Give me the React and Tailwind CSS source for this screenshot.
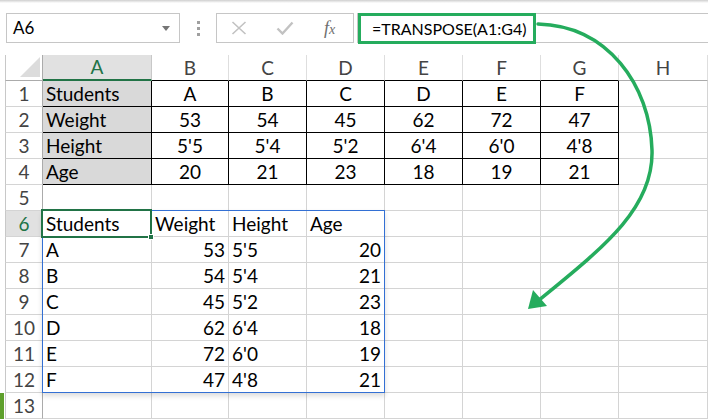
import React from 'react';

const COLS = ['A', 'B', 'C', 'D', 'E', 'F', 'G', 'H'];
const UPPER = [
  ['Students', 'A', 'B', 'C', 'D', 'E', 'F'],
  ['Weight', '53', '54', '45', '62', '72', '47'],
  ['Height', "5'5", "5'4", "5'2", "6'4", "6'0", "4'8"],
  ['Age', '20', '21', '23', '18', '19', '21'],
];
const LOWER = [
  ['Students', 'Weight', 'Height', 'Age'],
  ['A', '53', "5'5", '20'],
  ['B', '54', "5'4", '21'],
  ['C', '45', "5'2", '23'],
  ['D', '62', "6'4", '18'],
  ['E', '72', "6'0", '19'],
  ['F', '47', "4'8", '21'],
];

function Cell({ r, c }) {
  let text = '';
  let align = 'justify-start';
  let cls = 'border-r border-b border-[#d4d4d4]';
  if (r >= 1 && r <= 4 && c <= 6) {
    text = UPPER[r - 1][c];
    align = c === 0 ? 'justify-start' : 'justify-center';
    cls = c === 0 ? 'border-r border-b border-black bg-[#d9d9d9]' : 'border-r border-b border-black';
  } else if (r >= 6 && r <= 12 && c <= 3) {
    text = LOWER[r - 6][c];
    if (r > 6 && (c === 1 || c === 3)) align = 'justify-end';
  }
  return (
    <div className={`${cls} flex items-center ${align} px-[3px] pt-[1px] whitespace-nowrap`}>
      {text}
    </div>
  );
}

function Sheet() {
  const rows = [];
  rows.push(<div key="h-strip" className="bg-white" />);
  rows.push(
    <div key="corner" className="border-l border-r border-b border-l-[#c8c8c8] border-r-[#ababab] border-b-[#ababab] bg-white flex items-end justify-end pr-[2px] pb-[3px]">
      <svg width="20" height="20" viewBox="0 0 20 20">
        <polygon points="0,20 20,0 20,20" fill="#dcdcdc" />
      </svg>
    </div>
  );
  COLS.forEach((col, i) => {
    let cls;
    if (i === 0) cls = 'bg-[#e1e1e1] text-[#217346] border-r border-[#c8c8c8] border-b-2 border-b-[#217346]';
    else if (i <= 6) cls = 'bg-white text-[#444] border-r border-b border-r-[#dedede] border-b-black';
    else cls = 'bg-white text-[#444] border-r border-b border-r-[#dedede] border-b-[#ababab]';
    rows.push(
      <div key={'ch' + col} className={`${cls} flex items-center justify-center pt-[1px]`}>
        {col}
      </div>
    );
  });
  for (let r = 1; r <= 13; r++) {
    rows.push(
      <div key={'s' + r} className="flex justify-start">
        {r === 13 ? <div className="w-[4px] bg-[#5e9f2c]" /> : null}
      </div>
    );
    rows.push(
      <div
        key={'rh' + r}
        className={`${r === 6 ? 'bg-[#e1e1e1] text-[#217346] border-r-[#217346]' : 'bg-white text-[#444] border-r-[#ababab]'} border-l border-r border-b border-l-[#c8c8c8] border-b-[#d4d4d4] flex items-center justify-center pt-[1px]`}
      >
        {r}
      </div>
    );
    for (let c = 0; c < 8; c++) rows.push(<Cell key={r + '-' + c} r={r} c={c} />);
  }
  return (
    <div className="relative">
      <div className="grid grid-cols-[5px_38px_109px_77px_78px_78px_78px_78px_78px_89px] auto-rows-[26px] text-black">
        {rows}
      </div>
      <div className="absolute left-[42px] top-[155px] w-[343px] h-[183px] border border-[#3370d4] shadow-[0_3px_5px_rgba(0,0,0,0.14)] pointer-events-none" />
      <div className="absolute left-[41px] top-[154px] w-[111px] h-[29px] border-2 border-[#217346] pointer-events-none" />
      <div className="absolute left-[148px] top-[179px] w-[6px] h-[6px] bg-[#217346] border border-white pointer-events-none" />
    </div>
  );
}

function FormulaBar() {
  return (
    <div className="h-[55px] bg-white relative">
      <div className="h-[3px] bg-gradient-to-b from-[#cfcfcf] to-white" />
      <div className="flex items-start pt-[10px]">
        <div className="ml-[6px] w-[174px] h-[30px] border border-[#c6c6c6] flex items-center pl-[6px] pr-[9px] justify-between">
          <span className="text-[17px] text-black">A6</span>
          <svg width="8" height="5" viewBox="0 0 8 5" className="mt-[1px]">
            <polygon points="0,0 8,0 4,5" fill="#767676" />
          </svg>
        </div>
        <div className="ml-[17px] mt-[8px] flex flex-col gap-[3px]">
          <div className="w-[3px] h-[3px] bg-[#a0a0a0]" />
          <div className="w-[3px] h-[3px] bg-[#a0a0a0]" />
          <div className="w-[3px] h-[3px] bg-[#a0a0a0]" />
        </div>
        <div className="ml-[16px] w-[138px] h-[30px] border border-[#c6c6c6] flex items-center">
          <svg width="16" height="14" viewBox="0 0 16 14" className="ml-[14px]">
            <path d="M1.5 1 L14.5 13 M14.5 1 L1.5 13" stroke="#c2c2c2" strokeWidth="1.6" fill="none" />
          </svg>
          <svg width="18" height="14" viewBox="0 0 18 14" className="ml-[29px]">
            <path d="M1.5 7.5 L6.5 12.5 L16.5 1.5" stroke="#c2c2c2" strokeWidth="2.4" fill="none" />
          </svg>
          <span className="ml-[30px] text-[18px] italic text-[#6e6e6e] font-['Liberation_Serif',serif] leading-none">
            f<span className="text-[14px]">x</span>
          </span>
        </div>
        <div className="ml-[3px] flex-1 h-[30px] border-y border-l border-[#c6c6c6] relative">
          <div className="absolute left-0 top-[-1px] w-[178px] h-[31px] border-[3px] border-[#25ac5d] flex items-center pl-[11px]">
            <span className="text-[16px] text-black whitespace-nowrap">=TRANSPOSE(A1:G4)</span>
          </div>
        </div>
      </div>
    </div>
  );
}

export default function App() {
  return (
    <div className="w-[708px] h-[420px] overflow-hidden bg-white relative font-[Lato,sans-serif] text-[19px]">
      <FormulaBar />
      <Sheet />
      <svg className="absolute left-0 top-0 pointer-events-none" width="708" height="420" viewBox="0 0 708 420">
        <path
          d="M538 24 C 608 26, 650 85, 652 150 C 654 210, 600 250, 533 305"
          stroke="#25ac5d"
          strokeWidth="3.5"
          fill="none"
          strokeLinecap="round"
        />
        <polygon points="528,309 533,290 547,306" fill="#25ac5d" />
      </svg>
    </div>
  );
}
